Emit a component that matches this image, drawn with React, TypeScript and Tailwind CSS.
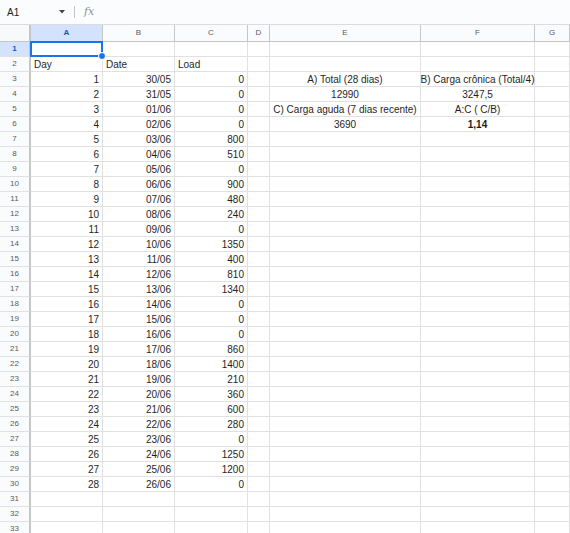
import { Fragment } from 'react'

const loads = [0, 0, 0, 0, 800, 510, 0, 900, 480, 240, 0, 1350, 400, 810, 1340, 0, 0, 0, 860, 1400, 210, 360, 600, 280, 0, 1250, 1200, 0]

function dateFor(day: number) {
  if (day === 1) return '30/05'
  if (day === 2) return '31/05'
  return String(day - 2).padStart(2, '0') + '/06'
}

const letters = ['A', 'B', 'C', 'D', 'E', 'F', 'G']

type Cell = { text?: string; align?: 'left' | 'right' | 'center'; bold?: boolean }

function rowCells(r: number): Cell[] {
  const cells: Cell[] = Array.from({ length: 7 }, () => ({}))
  if (r === 2) {
    cells[0] = { text: 'Day' }
    cells[1] = { text: 'Date' }
    cells[2] = { text: 'Load' }
  }
  if (r >= 3 && r <= 30) {
    const day = r - 2
    cells[0] = { text: String(day), align: 'right' }
    cells[1] = { text: dateFor(day), align: 'right' }
    cells[2] = { text: String(loads[day - 1]), align: 'right' }
  }
  if (r === 3) {
    cells[4] = { text: 'A) Total (28 dias)', align: 'center' }
    cells[5] = { text: 'B) Carga crônica (Total/4)', align: 'center' }
  }
  if (r === 4) {
    cells[4] = { text: '12990', align: 'center' }
    cells[5] = { text: '3247,5', align: 'center' }
  }
  if (r === 5) {
    cells[4] = { text: 'C) Carga aguda (7 dias recente)', align: 'center' }
    cells[5] = { text: 'A:C ( C/B)', align: 'center' }
  }
  if (r === 6) {
    cells[4] = { text: '3690', align: 'center' }
    cells[5] = { text: '1,14', align: 'center', bold: true }
  }
  return cells
}

const alignClass = {
  left: 'justify-start pl-[3px]',
  right: 'justify-end pr-[3px]',
  center: 'justify-center',
}

export default function App() {
  const rows = Array.from({ length: 33 }, (_, i) => i + 1)
  return (
    <div className="h-[533px] w-[570px] overflow-hidden bg-white font-['Liberation_Sans',Arial,sans-serif] text-[#1f1f1f]">
      {/* formula bar */}
      <div className="flex h-[25px] items-center border-b border-[#dadce0] bg-[#fbfcfd] text-[10px]">
        <span className="ml-[7px] w-[47px] text-[#1f1f1f]">A1</span>
        <svg width="6" height="4" viewBox="0 0 6 4" className="ml-[5px]">
          <path d="M0 0h6L3 3.5z" fill="#444746" />
        </svg>
        <div className="ml-[9px] h-[12px] w-px bg-[#c4c7c5]" />
        <span className="ml-[9px] font-['DejaVu_Serif',serif] text-[11px] italic text-[#8e918f]">fx</span>
      </div>

      {/* grid */}
      <div className="relative grid grid-cols-[31px_72px_72px_73px_22px_151px_114px_1fr] grid-rows-[17px] auto-rows-[15px]">
        <div className="border-b border-r-2 border-[#c4c7c5] bg-[#f8f9fa]" />
        {letters.map((l, i) => (
          <div
            key={l}
            className={
              'flex items-center justify-center border-b border-r border-[#c4c7c5] text-[8px] ' +
              (i === 0 ? 'bg-[#d3e3fd] font-semibold text-[#0b57d0]' : 'bg-[#fafbfc] text-[#575b5f]')
            }
          >
            {l}
          </div>
        ))}
        {rows.map((r) => (
          <Fragment key={r}>
            <div
              className={
                'flex items-center justify-center border-b border-r-2 border-b-[#e1e1e1] border-r-[#c4c7c5] text-[8px] ' +
                (r === 1 ? 'bg-[#d3e3fd] font-semibold text-[#0b57d0]' : 'bg-[#fafbfc] text-[#575b5f]')
              }
            >
              {r}
            </div>
            {rowCells(r).map((c, ci) => (
              <div
                key={ci}
                className={
                  'flex items-end overflow-visible whitespace-nowrap border-b border-r border-[#e1e1e1] pb-[1px] text-[10px] leading-none ' +
                  alignClass[c.align ?? 'left'] +
                  (c.bold ? ' font-bold' : '')
                }
              >
                {c.text}
              </div>
            ))}
          </Fragment>
        ))}

        {/* selection A1 */}
        <div className="pointer-events-none absolute left-[30px] top-[16px] h-[16px] w-[73px] border-2 border-[#1a73e8]">
          <div className="absolute -bottom-[5px] -right-[5px] h-[8px] w-[8px] rounded-full border border-white bg-[#1a73e8]" />
        </div>
      </div>
    </div>
  )
}
